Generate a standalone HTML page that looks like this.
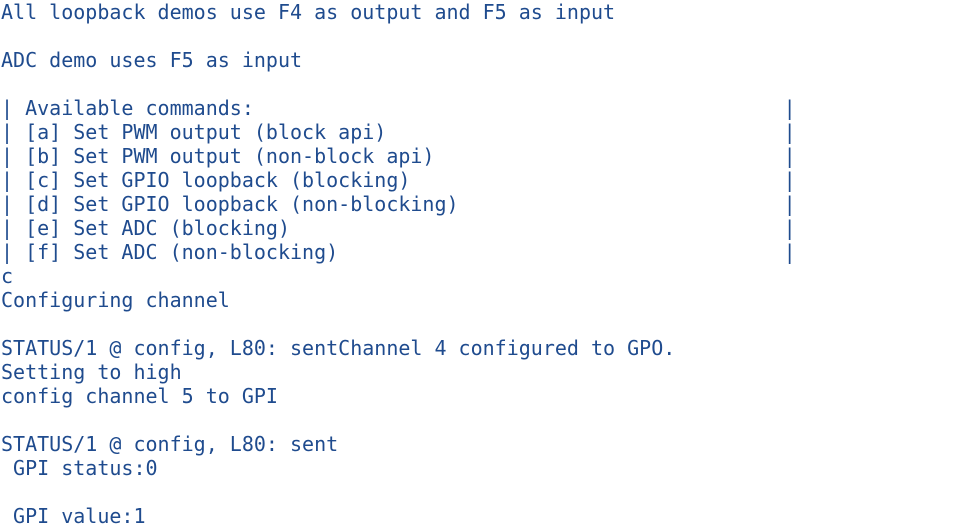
<html><head><style>
body{margin:0;background:#fff;width:968px;height:528px;overflow:hidden}
pre{margin:0;padding:0 0 0 1px;font-family:"DejaVu Sans Mono","Liberation Mono",monospace;font-size:20px;line-height:24px;color:#1f4b8e}
</style></head><body><pre>All loopback demos use F4 as output and F5 as input

ADC demo uses F5 as input

| Available commands:                                            |
| [a] Set PWM output (block api)                                 |
| [b] Set PWM output (non-block api)                             |
| [c] Set GPIO loopback (blocking)                               |
| [d] Set GPIO loopback (non-blocking)                           |
| [e] Set ADC (blocking)                                         |
| [f] Set ADC (non-blocking)                                     |
c
Configuring channel

STATUS/1 @ config, L80: sentChannel 4 configured to GPO.
Setting to high
config channel 5 to GPI

STATUS/1 @ config, L80: sent
 GPI status:0

 GPI value:1</pre></body></html>
